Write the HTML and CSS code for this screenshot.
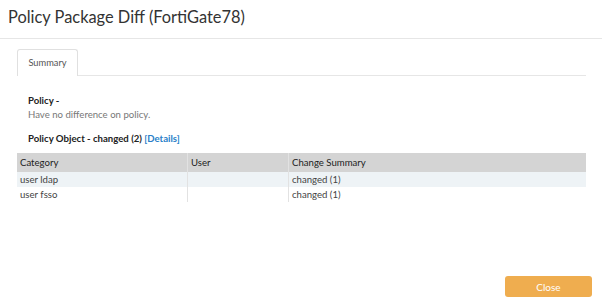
FILE: index.html
```html
<html lang="en">
  <head>
    <meta charset="UTF-8" />
    <title>Policy Package Diff</title>
    <link rel="stylesheet" href="styles.css">
  </head>
  <body>
    <div class="dialog">
      <div class="dialog-header">
        <h1>Policy Package Diff (FortiGate78)</h1>
      </div>
      <div class="dialog-body">
        <div class="tabs">
          <div class="tab active">Summary</div>
        </div>
        <div class="tab-content">
          <div class="section-title">Policy -</div>
          <div class="section-text">Have no difference on policy.</div>
          <div class="section-title">
            Policy Object - changed (2) <a href="#">[Details]</a>
          </div>
        </div>
        <table class="diff-table">
          <thead>
            <tr>
              <th class="col-cat">Category</th>
              <th class="col-user">User</th>
              <th>Change Summary</th>
            </tr>
          </thead>
          <tbody>
            <tr>
              <td>user ldap</td>
              <td></td>
              <td>changed (1)</td>
            </tr>
            <tr>
              <td>user fsso</td>
              <td></td>
              <td>changed (1)</td>
            </tr>
          </tbody>
        </table>
      </div>
      <div class="dialog-footer">
        <button class="close-button" type="button">Close</button>
      </div>
    </div>
  </body>
</html>
```

FILE: styles.css
```css
body {
  font-family: Lato, "Open Sans", sans-serif;
  background-color: white;
  margin: 0;
  color: #333;
}
.dialog {
  width: 602px;
  height: 308px;
  display: flex;
  flex-direction: column;
}
.dialog-header {
  height: 38px;
  border-bottom: 1px solid #e6e6e6;
  padding-left: 8px;
}
.dialog-header h1 {
  margin: 0;
  font-size: 16.4px;
  font-weight: normal;
  line-height: 34px;
  color: #333;
}
.dialog-body {
  flex: 1;
  padding: 10px 16px 0 17px;
}
.tabs {
  display: flex;
  border-bottom: 1px solid #e6e6e6;
}
.tab {
  width: 59px;
  height: 26px;
  line-height: 26px;
  text-align: center;
  font-size: 9.3px;
  color: #555;
  border: 1px solid #e0e0e0;
  border-bottom: none;
  border-radius: 3px 3px 0 0;
  margin-bottom: -1px;
  background-color: white;
}
.tab-content {
  padding: 8px 11px 0;
}
.section-title {
  font-size: 9.6px;
  font-weight: bold;
  color: #222;
  line-height: 14px;
  margin-top: 10px;
}
.section-title a {
  color: #2a7fc9;
  text-decoration: none;
}
.section-text {
  font-size: 9.6px;
  color: #777;
  line-height: 14px;
}
.diff-table {
  width: 569px;
  border-collapse: collapse;
  margin-top: 7px;
  font-size: 9.6px;
}
.diff-table th {
  background-color: #d4d4d4;
  font-weight: normal;
  color: #222;
  text-align: left;
  height: 19px;
  padding: 0 3px;
}
.diff-table td {
  height: 15px;
  padding: 0 3px;
  color: #444;
}
.diff-table th + th,
.diff-table td + td {
  border-left: 1px solid #e2e2e2;
}
.diff-table tbody tr:first-child {
  background-color: #eef3f6;
}
.col-cat {
  width: 164px;
}
.col-user {
  width: 94px;
}
.dialog-footer {
  display: flex;
  justify-content: flex-end;
  padding: 0 10px 11px 0;
}
.close-button {
  background-color: #efad4f;
  color: white;
  border: none;
  border-radius: 3px;
  width: 87px;
  height: 21px;
  font-family: Lato, sans-serif;
  font-size: 10px;
  cursor: pointer;
}
```
